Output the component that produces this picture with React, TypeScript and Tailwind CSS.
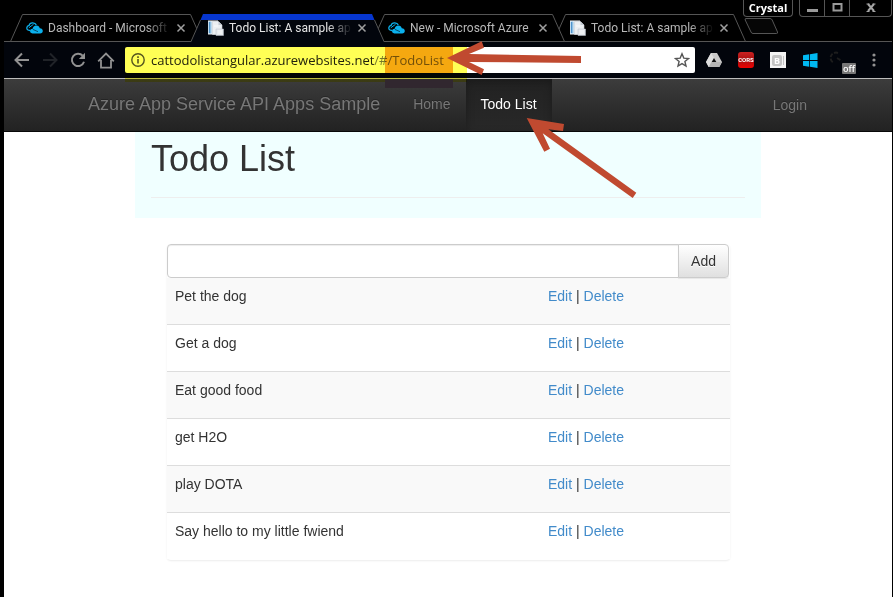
import { useState } from "react";
import type { ReactNode } from "react";

const uiFont = "font-['Open_Sans','Noto_Sans',sans-serif]";
const pageFont = "font-['Liberation_Sans',Arial,sans-serif]";

function CloudIcon() {
  return (
    <svg width="18" height="16" viewBox="0 0 18 16" className="shrink-0" aria-hidden="true">
      <path d="M4.500 10.500C1.800 10.700.7 9.400.8 7.900c.1-1.400 1.200-2.300 2.300-2.500C3.500 3.600 5 2.700 6.800 2.800c1.700.1 2.900.9 3.500 2.100" fill="none" stroke="#0bb0ec" strokeWidth="1.300" />
      <path d="M2.800 7.800 7.500 4.300" stroke="#0bb0ec" strokeWidth="1" />
      <path d="M6.500 13.500C4.500 13.300 3.900 12 4.100 10.800 4.400 9.500 5.500 8.700 6.700 8.800 6.800 6.700 8.400 5.300 10.400 5.400c1.800.1 3.100 1.200 3.400 2.900 1.900 0 3 1.200 3 2.700 0 1.500-1.100 2.500-2.700 2.500Z" fill="#0bb0ec" />
      <path d="M6.900 9.400 12 11.700" fill="none" stroke="#02415c" strokeWidth=".9" />
    </svg>
  );
}

function PageIcon() {
  return (
    <svg width="18" height="16" viewBox="0 0 18 16" className="shrink-0" aria-hidden="true">
      <path d="M1 .5h10v14H1z" fill="#f4f7fa" />
      <path d="M1.500 1.500h3v12h-3z" fill="#8fbfe2" />
      <path d="M2 2h1v11H2z" fill="#4f93cc" />
      <path d="M5.500 1.500h6L15 5v9.500H5.500z" fill="#eceff2" stroke="#c9ced4" strokeWidth=".6" />
      <path d="M11.500 1.500V5H15z" fill="#c3cad2" />
      <path d="M9 9h7.500v6.500H9z" fill="#e4e8ec" stroke="#b8bfc8" strokeWidth=".5" />
      <path d="M7 6h4M10.500 11h4.500M10.500 13h4.500" stroke="#fff" strokeWidth=".8" />
    </svg>
  );
}

type TabData = { title: string; icon: ReactNode; active?: boolean; layer: string; fade: string };

const tabs: TabData[] = [
  { title: "Dashboard - Microsoft", icon: <CloudIcon />, layer: "z-10", fade: "mask-r-from-80%" },
  { title: "Todo List: A sample ap", icon: <PageIcon />, active: true, layer: "z-30", fade: "mask-r-from-80%" },
  { title: "New - Microsoft Azure", icon: <CloudIcon />, layer: "z-20", fade: "" },
  { title: "Todo List: A sample ap", icon: <PageIcon />, layer: "z-10", fade: "mask-r-from-80%" },
];

function Tab({ title, icon, active, layer, fade }: TabData) {
  return (
    <div className={`relative flex h-7 w-[181px] shrink-0 items-center pl-4 ${layer}`}>
      <svg width="193" height="28" viewBox="0 0 193 28" className="absolute left-0 top-0" aria-hidden="true">
        {active ? (
          <>
            <path d="M0 28 12 0H181L193 28Z" fill="#02050c" />
            <path d="M9.500 6 12 0H181L183.500 6Z" fill="#0636cf" />
            <path d="M0 27.500 9.500 6M183.500 6 193 27.500" fill="none" stroke="#555" />
          </>
        ) : (
          <path d="M.5 27.500 12.500.5H180.500L192.500 27.500Z" fill="#000" stroke="#555" />
        )}
      </svg>
      <div className="relative flex min-w-0 flex-1 items-center gap-1">
        {icon}
        <span className={`flex-1 whitespace-nowrap font-['Roboto',sans-serif] text-xs ${fade} ${active ? "text-[#e4e4e4]" : "text-[#b8b8b8]"}`}>
          {title}
        </span>
        <button type="button" aria-label="Close tab" className="mr-1 flex w-3 justify-center">
          <svg width="10" height="10" viewBox="0 0 10 10" aria-hidden="true">
            <path d="m1.500 1.500 7 7m0-7-7 7" stroke="#a0a0a0" strokeWidth="1.500" />
          </svg>
        </button>
      </div>
    </div>
  );
}

function WindowButton({ label, children, className = "" }: { label: string; children: ReactNode; className?: string }) {
  return (
    <button type="button" aria-label={label} className={`flex h-4 items-center justify-center ${className}`}>
      {children}
    </button>
  );
}

function TabStrip() {
  return (
    <header className="relative flex h-[42px] border-b border-[#555] bg-black pl-[6px] pt-[14px]">
      {tabs.map((tab, i) => (
        <Tab key={i} {...tab} />
      ))}
      <button type="button" aria-label="New tab" className="ml-[10px] h-7 pb-1">
        <svg width="36" height="18" viewBox="0 0 36 18" aria-hidden="true">
          <path d="M2 1.500H26Q27.500 1.500 28.200 3L33.500 15Q34 16.500 32.500 16.500H9Q7.500 16.500 7 15L1.200 3Q.7 1.500 2 1.500Z" fill="#060606" stroke="#555" />
        </svg>
      </button>
      <div className="absolute right-0 top-0 flex gap-[6px]">
        <button type="button" className="h-[17px] w-[50px] rounded-b-[4px] border border-t-0 border-[#555] text-[11px] leading-4 font-bold text-white">
          Crystal
        </button>
        <div className="flex h-[17px] divide-x divide-[#555] rounded-b-[4px] border border-t-0 border-[#555]">
          <WindowButton label="Minimize" className="w-[25px]">
            <svg width="11" height="10" viewBox="0 0 11 10" aria-hidden="true"><path d="M0 6h11v3H0z" fill="#9a9a9a" /></svg>
          </WindowButton>
          <WindowButton label="Maximize" className="w-[25px]">
            <svg width="11" height="10" viewBox="0 0 11 10" aria-hidden="true"><path d="M1.500 1h8v6.500h-8z" fill="none" stroke="#9a9a9a" strokeWidth="2" /></svg>
          </WindowButton>
          <WindowButton label="Close" className="w-[41px]">
            <svg width="10" height="10" viewBox="0 0 10 10" aria-hidden="true"><path d="m2 1 6 7m0-7L2 8" stroke="#a5a5a5" strokeWidth="2" /><path d="M.5 1h3M6.500 1h3M.5 8.500h3M6.500 8.500h3" stroke="#a5a5a5" /></svg>
          </WindowButton>
        </div>
      </div>
    </header>
  );
}

function ToolButton({ label, children, wide }: { label: string; children: ReactNode; wide?: boolean }) {
  return (
    <button type="button" aria-label={label} className={`flex h-7 shrink-0 items-center justify-center ${wide ? "w-8" : "w-7"}`}>
      {children}
    </button>
  );
}

function Toolbar() {
  const [address, setAddress] = useState("cattodolistangular.azurewebsites.net/#/TodoList");
  const hostEnd = "cattodolistangular.azurewebsites.net";
  return (
    <div className="flex h-[37px] items-center border-b border-[#bdbdbd] bg-[#02050c] pl-1 pr-[2px]">
      <ToolButton label="Back">
        <svg width="16" height="16" viewBox="0 0 16 16" fill="none" stroke="#929292" strokeWidth="2" aria-hidden="true"><path d="M15 8H2M8 1.500 1.500 8 8 14.500" /></svg>
      </ToolButton>
      <ToolButton label="Forward">
        <svg width="16" height="16" viewBox="0 0 16 16" fill="none" stroke="#202328" strokeWidth="2" aria-hidden="true"><path d="M1 8h13M8 1.500 14.500 8 8 14.500" /></svg>
      </ToolButton>
      <ToolButton label="Reload">
        <svg width="16" height="16" viewBox="0 0 16 16" fill="none" aria-hidden="true">
          <path d="M12.700 3.700A6.200 6.200 0 1 0 14 9.800" stroke="#929292" strokeWidth="2" />
          <path d="M15 .8V7H8.800Z" fill="#929292" />
        </svg>
      </ToolButton>
      <ToolButton label="Home">
        <svg width="18" height="17" viewBox="0 0 18 17" fill="none" stroke="#929292" strokeWidth="1.800" aria-hidden="true"><path d="M1.200 9.300 9 1.500l7.800 7.800M4 8v7.600h10V8" /></svg>
      </ToolButton>
      <div className="relative ml-[5px] mr-[3px] flex h-[26px] min-w-0 flex-1 items-center rounded-[2px] bg-white pl-[6px] pr-[5px]">
        <svg width="14" height="14" viewBox="0 0 14 14" className="shrink-0" aria-hidden="true">
          <circle cx="7" cy="7" r="6.200" fill="none" stroke="#555" strokeWidth="1.400" />
          <path d="M6.200 6h1.600v4.500H6.200zM6.200 3.300h1.600v1.600H6.200z" fill="#555" />
        </svg>
        <div className="relative ml-[6px] min-w-0 flex-1 text-[13px] leading-5">
          <div aria-hidden="true" className="overflow-hidden whitespace-nowrap text-[#222]">
            {address.startsWith(hostEnd) ? hostEnd : address}
            {address.startsWith(hostEnd) && <span className="text-[#777]">{address.slice(hostEnd.length)}</span>}
          </div>
          <input
            aria-label="Address"
            value={address}
            onChange={(e) => setAddress(e.target.value)}
            className="absolute inset-0 w-full bg-transparent text-transparent caret-black outline-none"
          />
        </div>
        <button type="button" aria-label="Bookmark">
          <svg width="16" height="16" viewBox="0 0 16 16" fill="none" stroke="#555" strokeWidth="1.400" aria-hidden="true"><path d="m8 1.800 1.800 4.300 4.700.4-3.600 3 1.100 4.600L8 11.600l-4 2.500 1.100-4.600-3.600-3 4.700-.4Z" /></svg>
        </button>
        <div className="pointer-events-none absolute left-0 top-0 z-10 h-[35px] w-[342px] bg-[#ffff55] mix-blend-multiply" />
        <div className="pointer-events-none absolute left-[260px] top-0 z-10 h-[26px] w-[68px] bg-[#f5a830] mix-blend-multiply" />
        <div className="pointer-events-none absolute left-[260px] top-[32px] z-10 h-[9px] w-[68px] bg-[#31272f]" />
      </div>
      <ToolButton label="Drive" wide>
        <svg width="16" height="14" viewBox="0 0 16 14" aria-hidden="true">
          <path d="M5 0h6l5 9-2.700 5H2.700L0 9Z" fill="#c9c9c9" />
          <path d="M5 0 8 5 2.700 14 0 9Z" fill="#dedede" />
          <path d="M5.500 9h10.500l-2.700 5H2.700Z" fill="#b5b5b5" />
          <path d="M8 5 10.300 9H5.700Z" fill="#111" />
        </svg>
      </ToolButton>
      <ToolButton label="Cross-origin requests" wide>
        <span className="flex h-4 w-4 items-center justify-center rounded-[3px] bg-linear-to-b from-[#c22] via-[#a80d0d] to-[#f00000] font-['Roboto',sans-serif] text-[6px] leading-none font-bold text-white">
          CORS
        </span>
      </ToolButton>
      <ToolButton label="Bold" wide>
        <span className="flex h-4 w-4 items-center justify-center bg-[#f4f4f4]">
          <span className="h-[11px] w-[10px] rounded-[2px] bg-[#c4c4c4] text-[9px] leading-[11px] font-bold text-white">B</span>
          <span className="ml-px h-[9px] w-px bg-[#c4c4c4]" />
        </span>
      </ToolButton>
      <ToolButton label="Windows" wide>
        <svg width="15" height="15" viewBox="0 0 15 15" fill="#00b9f2" aria-hidden="true"><path d="M0 2.200 6.200 1.300V7H0zM7 1.200 14.500 0v7H7zM0 7.900h6.200v5.800L0 12.800zM7 7.900h7.500V15L7 13.800z" /></svg>
      </ToolButton>
      <ToolButton label="Extension off" wide>
        <span className="relative block h-5 w-5">
          <svg width="16" height="16" viewBox="0 0 16 16" fill="none" stroke="#1d1d1d" strokeWidth="2" className="absolute -left-1 top-0" aria-hidden="true"><path d="M10 3A5 5 0 1 0 6 13M9 8l5 3" strokeDasharray="4 1.500" /></svg>
          <span className="absolute left-[10px] top-[13px] flex h-[11px] w-[14px] items-center justify-center rounded-[1px] bg-[#777] text-[9px] leading-none font-semibold text-white">off</span>
        </span>
      </ToolButton>
      <ToolButton label="Menu" wide>
        <svg width="4" height="14" viewBox="0 0 4 14" fill="#929292" aria-hidden="true"><circle cx="2" cy="2" r="1.600" /><circle cx="2" cy="7" r="1.600" /><circle cx="2" cy="12" r="1.600" /></svg>
      </ToolButton>
    </div>
  );
}

function Navbar() {
  return (
    <nav className="h-[53px] border-b border-[#080808] bg-linear-to-b from-[#3c3c3c] to-[#222] text-sm leading-5 text-[#777] [text-shadow:0_-1px_0_rgba(0,0,0,.25)]">
      <div className="mx-auto flex h-full max-w-[750px]">
        <a href="#/" className="py-[15px] pl-[15px] pr-[18px] text-lg leading-5">Azure App Service API Apps Sample</a>
        <a href="#/Home" className="px-[15px] py-[15px]">Home</a>
        <a href="#/TodoList" aria-current="page" className="bg-linear-to-b from-[#222] to-[#282828] px-[15px] py-[15px] text-white shadow-[inset_0_3px_9px_rgba(0,0,0,.25)]">Todo List</a>
        <a href="#/Login" className="ml-auto px-4 py-4">Login</a>
      </div>
    </nav>
  );
}

const initialItems = ["Pet the dog", "Get a dog", "Eat good food", "get H2O", "play DOTA", "Say hello to my little fwiend"];

function TodoPage() {
  const [items, setItems] = useState(initialItems);
  const [draft, setDraft] = useState("");
  const add = () => {
    if (draft.trim()) setItems([...items, draft.trim()]);
    setDraft("");
  };
  return (
    <main className="mx-auto max-w-[626px] text-sm leading-5 text-[#333]">
      <div className="bg-[#f0ffff] px-4 pb-5 pt-[7px]">
        <h1 className="border-b border-[#eee] pb-[19px] text-4xl leading-[39px]">Todo List</h1>
      </div>
      <div className="ml-8 mr-[31px] mt-[26px] rounded-[4px] pb-px shadow-[0_1px_2px_rgba(0,0,0,.08)]">
        <form
          className="mr-px flex h-[34px]"
          onSubmit={(e) => {
            e.preventDefault();
            add();
          }}
        >
          <input
            aria-label="New todo"
            value={draft}
            onChange={(e) => setDraft(e.target.value)}
            className="min-w-0 flex-1 rounded-l-[4px] border border-[#ccc] bg-white px-3 shadow-[inset_0_1px_1px_rgba(0,0,0,.075)]"
          />
          <button type="submit" className="-ml-px rounded-r-[4px] border border-[#ccc] bg-linear-to-b from-white to-[#e0e0e0] px-3 shadow-[0_1px_1px_rgba(0,0,0,.075)] [text-shadow:0_1px_0_#fff]">
            Add
          </button>
        </form>
        <table className="w-full table-fixed border-collapse">
          <tbody>
            {items.map((item) => (
              <tr key={item} className="h-[47px] border-t border-[#ddd] align-top first:h-[46px] first:border-t-0 odd:bg-[#f9f9f9] even:bg-white">
                <td className="w-[373px] px-2 pt-2">{item}</td>
                <td className="px-2 pt-2 whitespace-nowrap">
                  <a href="#/edit" className="text-[#428bca]">Edit</a> |{" "}
                  <a href="#/delete" className="text-[#428bca]">Delete</a>
                </td>
              </tr>
            ))}
          </tbody>
        </table>
      </div>
    </main>
  );
}

function Annotations() {
  return (
    <svg width="200" height="170" viewBox="440 35 200 170" className="pointer-events-none absolute left-[440px] top-[35px] z-40" fill="#c04a30" aria-hidden="true">
      <path d="M447 58 481.700 41.300 484 47.700 469 54 581 56V63L469 62 484 69.300 481.700 75Z" />
      <path d="M526.700 118 564 124 563 131 548.300 129.300 636.300 192.700 632.700 198 542.700 133.300 550 148.700 544.300 151.700Z" />
    </svg>
  );
}

export default function App() {
  return (
    <div className="relative min-h-screen border-l-4 border-r border-black bg-white">
      <div className={uiFont}>
        <TabStrip />
        <Toolbar />
      </div>
      <div className={pageFont}>
        <Navbar />
        <TodoPage />
      </div>
      <div className="absolute -left-1 top-0">
        <Annotations />
      </div>
    </div>
  );
}
